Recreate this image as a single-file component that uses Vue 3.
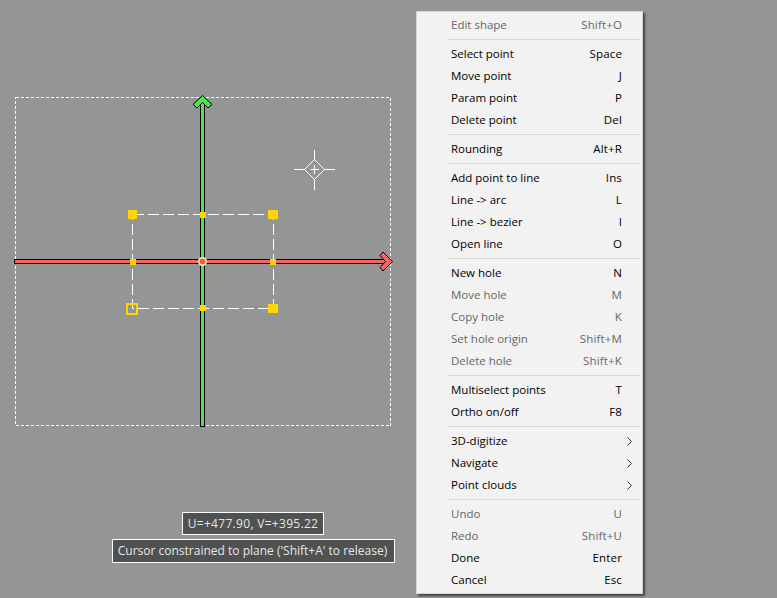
<script setup>
const groups = [
  [{ l: 'Edit shape', k: 'Shift+O', d: true }],
  [
    { l: 'Select point', k: 'Space' },
    { l: 'Move point', k: 'J' },
    { l: 'Param point', k: 'P' },
    { l: 'Delete point', k: 'Del' },
  ],
  [{ l: 'Rounding', k: 'Alt+R' }],
  [
    { l: 'Add point to line', k: 'Ins' },
    { l: 'Line -> arc', k: 'L' },
    { l: 'Line -> bezier', k: 'I' },
    { l: 'Open line', k: 'O' },
  ],
  [
    { l: 'New hole', k: 'N' },
    { l: 'Move hole', k: 'M', d: true },
    { l: 'Copy hole', k: 'K', d: true },
    { l: 'Set hole origin', k: 'Shift+M', d: true },
    { l: 'Delete hole', k: 'Shift+K', d: true },
  ],
  [
    { l: 'Multiselect points', k: 'T' },
    { l: 'Ortho on/off', k: 'F8' },
  ],
  [
    { l: '3D-digitize', sub: true },
    { l: 'Navigate', sub: true },
    { l: 'Point clouds', sub: true },
  ],
  [
    { l: 'Undo', k: 'U', d: true },
    { l: 'Redo', k: 'Shift+U', d: true },
    { l: 'Done', k: 'Enter' },
    { l: 'Cancel', k: 'Esc' },
  ],
]
</script>

<template>
  <div class="stage">
    <svg class="canvas" width="777" height="598" viewBox="0 0 777 598">
      <rect class="frame" x="15.5" y="97.5" width="375" height="328" />
      <!-- green axis -->
      <rect x="200" y="100" width="5" height="327" fill="#000" />
      <rect x="201" y="100" width="3" height="326" fill="#54e054" />
      <polygon class="head-g" points="202.5,95.5 212,104.5 208,108 202.5,102.5 197,108 193,104.5" />
      <!-- red axis -->
      <rect x="14" y="259" width="372" height="5" fill="#000" />
      <rect x="15" y="260" width="372" height="3" fill="#f76464" />
      <polygon class="head-r" points="392.5,261.5 383,271 380,267.5 385.5,261.5 380,255.5 383,252" />
      <!-- selection -->
      <rect class="sel" x="132.5" y="214.5" width="141" height="94" />
      <rect class="h" x="128" y="210" width="9" height="9" />
      <rect class="h" x="268" y="210" width="10" height="9" />
      <rect class="h" x="268" y="304" width="10" height="9" />
      <rect class="h" x="200" y="212" width="6" height="6" />
      <rect class="h" x="130" y="259" width="6" height="6" />
      <rect class="h" x="270" y="259" width="6" height="6" />
      <rect class="h" x="200" y="305" width="6" height="6" />
      <rect x="127" y="304" width="10" height="10" fill="none" stroke="#ffd700" stroke-width="2" />
      <!-- origin -->
      <circle cx="202.5" cy="261.5" r="4.5" fill="#f4f0ea" />
      <circle cx="202.5" cy="261.5" r="3" fill="#ef6a0c" />
      <!-- cursor -->
      <g class="cur">
        <path d="M314.5 159.5 L324.5 169.5 L314.5 179.5 L304.5 169.5 Z" />
        <path d="M294 169.5H305M324 169.5H335M314.5 150V160M314.5 179V190M310.5 169.5H319M314.5 165V174" />
      </g>
    </svg>

    <div class="tip tip-a">U=+477.90, V=+395.22</div>
    <div class="tip tip-b">Cursor constrained to plane ('Shift+A' to release)</div>

    <div class="menu">
      <template v-for="(g, i) in groups" :key="i">
        <div v-if="i > 0" class="sep"></div>
        <div v-for="it in g" :key="it.l" class="row" :class="{ off: it.d }">
          <span class="label">{{ it.l }}</span>
          <span v-if="it.k" class="key">{{ it.k }}</span>
          <svg v-if="it.sub" class="chev" width="5" height="9" viewBox="0 0 5 9">
            <path d="M0.5 0.5 L4.5 4.5 L0.5 8.5" fill="none" stroke="#333" stroke-width="1" />
          </svg>
        </div>
      </template>
    </div>
  </div>
</template>

<style>
html, body { margin: 0; background: #949695; }
</style>

<style scoped>
.stage {
  position: relative;
  width: 777px;
  height: 598px;
  overflow: hidden;
  background: #949695;
  font-family: "Open Sans", "Noto Sans", sans-serif;
  font-size: 11.5px;
}
.canvas { display: block; }
.frame { fill: none; stroke: #fff; stroke-width: 1; stroke-dasharray: 3 2; shape-rendering: crispEdges; }
.sel { fill: none; stroke: #fff; stroke-width: 1; stroke-dasharray: 11 4; shape-rendering: crispEdges; }
.h { fill: #ffd700; }
.head-g { fill: #54e054; stroke: #000; stroke-width: 1; }
.head-r { fill: #f76464; stroke: #000; stroke-width: 1; }
.cur path { fill: none; stroke: #fff; stroke-width: 1; }

.tip {
  position: absolute;
  box-sizing: border-box;
  background: #505252;
  border: 1px solid #fff;
  color: #e6e6e6;
  white-space: nowrap;
  display: flex;
  align-items: center;
  justify-content: center;
  font-size: 12px;
  padding-bottom: 1px;
}
.tip-a { left: 182px; top: 512px; width: 142px; height: 23px; letter-spacing: 0.3px; }
.tip-b { left: 112px; top: 539px; width: 283px; height: 24px; padding-right: 2px; }

.menu {
  position: absolute;
  left: 416px;
  top: 11px;
  width: 227px;
  box-sizing: border-box;
  padding: 2px;
  background: #f2f2f2;
  border: 1px solid #d4d4d4;
  box-shadow: 2px 2px 2px rgba(0, 0, 0, 0.55);
  color: #000;
}
.row {
  box-sizing: border-box;
  height: 22px;
  display: flex;
  align-items: center;
  justify-content: space-between;
  padding: 0 18px 2px 32px;
}
.row.off { color: #666; }
.key { letter-spacing: 0.15px; }
.chev { margin-right: -10px; margin-top: 2px; }
.sep {
  height: 1px;
  margin: 3px 0 3px 28px;
  background: #d7d7d7;
}
</style>
